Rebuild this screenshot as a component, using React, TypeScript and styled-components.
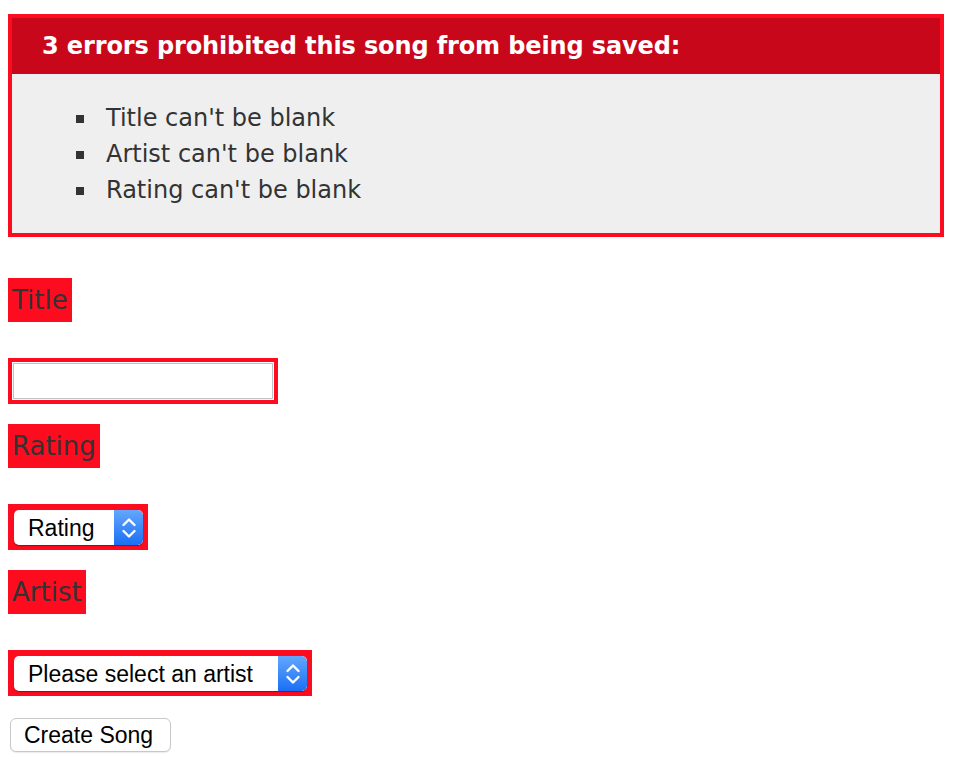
import React from 'react'
import styled, { createGlobalStyle } from 'styled-components'

const RED = '#fd0b1e'

const GlobalStyle = createGlobalStyle`
    html, body {
        margin: 0;
        padding: 0;
        background: #fff;
    }

    body {
        font-family: Verdana, 'DejaVu Sans', sans-serif;
        color: #333;
    }
`

const Page = styled.div`
    padding: 14px 8px 16px 8px;
`

const ErrorBox = styled.div`
    width: 928px;
    border: 4px solid ${RED};
    background-color: #efefef;
    margin-bottom: 41px;
`

const ErrorTitle = styled.h2`
    margin: 0;
    padding: 10px 10px 10px 30px;
    background-color: #c9071a;
    color: #fff;
    font-size: 24px;
    font-weight: bold;
    line-height: 36px;
    letter-spacing: -0.12px;
`

const ErrorList = styled.ul`
    margin: 26px 0 25px 0;
    padding: 0 0 0 94px;
    list-style: none;
`

const ErrorItem = styled.li`
    position: relative;
    font-size: 24px;
    line-height: 36px;

    &::before {
        content: '';
        position: absolute;
        left: -30px;
        top: 15px;
        width: 8px;
        height: 8px;
        background-color: #333;
    }
`

const Field = styled.div`
    display: flex;
    flex-direction: column;
    align-items: flex-start;
    gap: 36px;
    margin-bottom: 20px;
`

const ErrorLabel = styled.label`
    display: block;
    background-color: ${RED};
    padding: 4px;
    font-size: 26px;
    line-height: 36px;
    color: #333;
`

const ErrorWrap = styled.div<{ $pad: string }>`
    display: flex;
    background-color: ${RED};
    padding: ${(props) => props.$pad};
`

const TextInput = styled.input`
    box-sizing: border-box;
    width: 262px;
    height: 38px;
    margin: 0;
    border: 1px solid #fff;
    box-shadow: inset 0 0 0 1px #c2c2c2;
    background: #fff;
    outline: none;
    font-size: 22px;
`

const SelectBox = styled.div<{ $width: number }>`
    position: relative;
    box-sizing: border-box;
    width: ${(props) => props.$width}px;
    height: 35px;
    border-radius: 5px;
    background: #fff;
    box-shadow: 0 1px 1px rgba(0, 0, 0, 0.35);
    overflow: hidden;
`

const NativeSelect = styled.select`
    appearance: none;
    -webkit-appearance: none;
    width: 100%;
    height: 100%;
    margin: 0;
    border: 0;
    padding: 0 0 0 14px;
    background: transparent;
    font-family: 'Liberation Sans', Arial, sans-serif;
    font-size: 23px;
    color: #000;
    outline: none;
`

const Stepper = styled.span`
    position: absolute;
    top: 0;
    right: 0;
    bottom: 0;
    width: 29px;
    display: flex;
    align-items: center;
    justify-content: center;
    background: linear-gradient(#63a7fe, #1a6ff4);
    border-radius: 0 5px 5px 0;
    pointer-events: none;
`

const SubmitButton = styled.button`
    box-sizing: border-box;
    margin: 2px 0 0 2px;
    width: 161px;
    height: 34px;
    padding: 0 0 0 13px;
    text-align: left;
    border: 1px solid #c8c8c8;
    border-radius: 6px;
    background: #fff;
    box-shadow: 0 1px 1px rgba(0, 0, 0, 0.08);
    font-family: 'Liberation Sans', Arial, sans-serif;
    font-size: 23px;
    color: #000;
`

const errors = [
    "Title can't be blank",
    "Artist can't be blank",
    "Rating can't be blank",
]

const StepperIcon = () => (
    <svg width="16" height="26" viewBox="0 0 16 26" fill="none">
        <path
            d="M2.5 10 L8 4.5 L13.5 10"
            stroke="#fff"
            strokeWidth="2.4"
            strokeLinecap="round"
            strokeLinejoin="round"
        />
        <path
            d="M2.5 16 L8 21.5 L13.5 16"
            stroke="#fff"
            strokeWidth="2.4"
            strokeLinecap="round"
            strokeLinejoin="round"
        />
    </svg>
)

const Select = ({ width, placeholder }: { width: number; placeholder: string }) => (
    <SelectBox $width={width}>
        <NativeSelect defaultValue="">
            <option value="">{placeholder}</option>
        </NativeSelect>
        <Stepper>
            <StepperIcon />
        </Stepper>
    </SelectBox>
)

export default function App() {
    return (
        <Page>
            <GlobalStyle />
            <ErrorBox>
                <ErrorTitle>3 errors prohibited this song from being saved:</ErrorTitle>
                <ErrorList>
                    {errors.map((e) => (
                        <ErrorItem key={e}>{e}</ErrorItem>
                    ))}
                </ErrorList>
            </ErrorBox>

            <Field>
                <ErrorLabel>Title</ErrorLabel>
                <ErrorWrap $pad="4px">
                    <TextInput type="text" />
                </ErrorWrap>
            </Field>

            <Field>
                <ErrorLabel>Rating</ErrorLabel>
                <ErrorWrap $pad="6px 5px 5px 6px">
                    <Select width={129} placeholder="Rating" />
                </ErrorWrap>
            </Field>

            <Field>
                <ErrorLabel>Artist</ErrorLabel>
                <ErrorWrap $pad="6px 5px 5px 6px">
                    <Select width={293} placeholder="Please select an artist" />
                </ErrorWrap>
            </Field>

            <SubmitButton>Create Song</SubmitButton>
        </Page>
    )
}
